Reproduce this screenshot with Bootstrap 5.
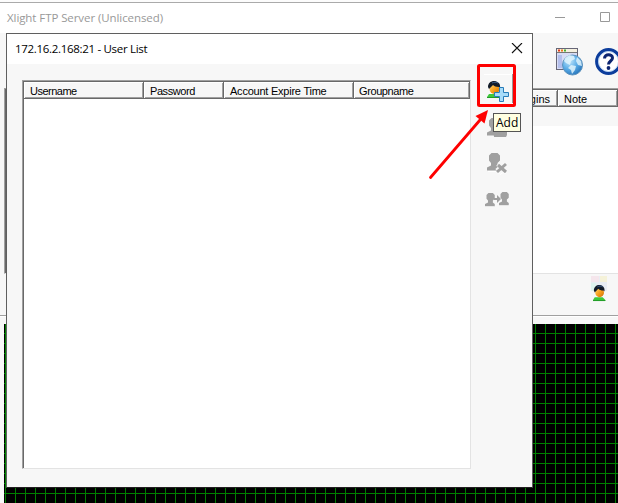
<!DOCTYPE html>
<html lang="en">
<head>
<meta charset="utf-8">
<meta name="viewport" content="width=device-width, initial-scale=1">
<title>Xlight FTP Server</title>
<link href="https://cdn.jsdelivr.net/npm/bootstrap@5.3.0/dist/css/bootstrap.min.css" rel="stylesheet">
<style>
html, body { height: 503px; overflow: hidden; }
body { font: 12px/16px "Open Sans", "Noto Sans", sans-serif; color: #000; background: #f7f7f7; }
svg { display: block; flex: none; }
.main-win { width: 618px; height: 503px; }
.main-title { height: 33px; border-top: 2px solid #fcfcfc; background: #fff; color: #999; }
.main-title .cap { border-top: 1px solid #aaa; padding: 0 8px 0 7px; height: 31px; }
.main-title .txt { font-size: 11.5px; letter-spacing: -.08px; }
.toolbar { height: 55px; padding: 14px 0 0 556px; gap: 11px; }
.main-list { height: 186px; margin-left: 4px; border: solid #a0a0a0; border-width: 1px 0 0 1px; border-bottom: 1px solid #e3e3e3; background: #fff; }
.main-list .inner { border: solid #696969; border-width: 1px 0 0 1px; height: 184px; }
.hcell { font: 11px/17px "Liberation Sans", Arial, sans-serif; background: #f7f7f7; border: solid #696969; border-width: 0 1px 1px 0; box-shadow: inset 1px 1px #fff, inset -1px -1px #a0a0a0; padding: 1px 7px 0 6px; height: 17px; white-space: nowrap; flex: none; }
.sel-row { height: 19px; background: #f7f7f7; }
.status { height: 42px; border-bottom: 1px solid #a0a0a0; padding: 2px 0 0 591px; }
.graph-gap { height: 8px; border-top: 1px solid #fff; }
.graph { margin-left: 4px; background: #000 repeating-linear-gradient(90deg, transparent 0 1px, #008000 1px 2px, transparent 2px 10px); }
.graph .rows { height: 100%; background: repeating-linear-gradient(transparent 0 9px, #008000 9px 10px); }
.dialog { position: absolute; left: 6px; top: 33px; width: 527px; height: 455px; border: 1px solid #5f5f5f; border-bottom-color: #202020; background: #f7f7f7; }
.dlg-title { height: 30px; background: #fff; padding: 0 9px 1px 8px; }
.dlg-title .txt { font-size: 11.5px; letter-spacing: -.31px; }
.dlg-body { padding: 16px 0 0 15px; }
.user-list { width: 449px; height: 389px; background: #fff; border: 1px solid #a0a0a0; border-right-color: #e3e3e3; border-bottom-color: #e3e3e3; }
.user-list .inner { height: 387px; border: solid #696969; border-width: 1px 0 0 1px; }
.w1 { width: 120px; letter-spacing: -.5px; } .w2 { width: 80px; letter-spacing: -.42px; }
.w3 { width: 130px; letter-spacing: -.23px; } .w4 { width: 116px; padding-left: 5px; letter-spacing: -.4px; }
.side { margin-top: -6px; padding: 0 0 0 13px; gap: 13px; }
.overlay { position: absolute; left: 0; top: 0; }
.tip { position: absolute; left: 493px; top: 113px; width: 28px; height: 19px; line-height: 18px; background: #ffffe1; border: 1px solid #555; padding-left: 2px; }
</style>
<script src="https://cdn.jsdelivr.net/npm/bootstrap@5.3.0/dist/js/bootstrap.bundle.min.js"></script>
</head>
<body>
<svg width="0" height="0" class="position-absolute">
<defs>
<linearGradient id="face" x1="0" y1="0" x2="1" y2="1"><stop stop-color="#ffd77a"/><stop offset=".5" stop-color="#f9a01b"/><stop offset="1" stop-color="#c96d05"/></linearGradient>
<radialGradient id="globe" cx=".35" cy=".3" r=".8"><stop stop-color="#c3e6fb"/><stop offset=".5" stop-color="#5caee8"/><stop offset="1" stop-color="#1f6db5"/></radialGradient>
<g id="person"><path d="M0 18l2-3h9l3 3v1H0z" fill="#3fc83a"/><path d="M0 18h14v1H0z" fill="#219a27"/><circle cx="7.500" cy="10" r="5" fill="url(#face)"/><path d="M1 8C1 4 4 2 7 2s7 2 6 7l-1-1c-3 0-5-1-6-2L3 9l-1 1z" fill="#131b28"/><path d="M5 4c2-1 4-1 6 0" stroke="#3d6290" fill="none"/></g>
<path id="bust" d="M4.500 0h6l2.500 2.500v5L10.500 10v2.500L13 14.500v3H0v-3l4-2V10L2 7.500v-5z"/>
</defs>
</svg>
<div class="main-win d-flex flex-column">
  <header class="main-title">
    <div class="cap d-flex align-items-center justify-content-between">
      <span class="txt">Xlight FTP Server (Unlicensed)</span>
      <svg width="55" height="12" fill="none" stroke="#999"><path d="M0 5.500h10M45.500 .500h9v9h-9z"/></svg>
    </div>
  </header>
  <nav class="toolbar d-flex">
    <svg width="28" height="30">
      <rect x=".5" y="1.500" width="21" height="21" fill="#d7dcf5" stroke="#667"/><path d="M1 2h20v4H1z" fill="#f5f0df"/><path d="M1 5.500h20" stroke="#777"/>
      <path d="M2 2.500h2v2H2z" fill="#e43b1a"/><path d="M5 2.500h2v2H5z" fill="#ef7521"/><path d="M8 2.500h2v2H8z" fill="#44af36"/><path d="M2 8h4v13H2z" fill="#b4bfec"/>
      <circle cx="16.500" cy="18" r="10" fill="url(#globe)" stroke="#5c92bd"/>
      <path d="M9 11l4-3 5 1 1 3-4 2-1 4-4-2-2-2zM15 18l5 1-1 4-3 4-1-4-3-2zM21 10l4 4 1 5-4-1-2-4z" fill="#e0f3fc" opacity=".85"/>
    </svg>
    <svg width="28" height="30"><circle cx="13.500" cy="14.500" r="11.800" fill="#fff" stroke="#0c3d9c" stroke-width="3.200"/><circle cx="13.500" cy="14.500" r="10" fill="none" stroke="#b7d4f4"/><path d="M9.500 11.500c0-5 8-5 8-.5 0 3-4 3-4 6.500" fill="none" stroke="#0b2470" stroke-width="3"/><circle cx="13.500" cy="21" r="1.900" fill="#0b2470"/></svg>
  </nav>
  <section class="main-list"><div class="inner">
    <div class="d-flex justify-content-end">
      <div class="hcell text-end" style="width:60px">Logins</div>
      <div class="hcell" style="width:60px">Note</div>
    </div>
    <div class="sel-row"></div>
  </div></section>
  <div class="status"><svg width="16" height="28"><path d="M0 0h16v15H0z" fill="#e9edf3"/><path d="M0 0h8v6H0z" fill="#f5e6ec"/><path d="M9 0h7v6H9z" fill="#f5f2d9"/><path d="M0 7h5v8H0z" fill="#dff3ee"/><use href="#person" transform="translate(2 7) scale(.88 .95)"/></svg></div>
  <div class="graph-gap"></div>
  <div class="graph flex-fill"><div class="rows"></div></div>
</div>

<section class="dialog">
  <header class="dlg-title d-flex align-items-center justify-content-between">
    <span class="txt">172.16.2.168:21 - User List</span>
    <svg width="12" height="12" stroke="#111" stroke-width="1.100"><path d="M1 0l10 10M11 0L1 10"/></svg>
  </header>
  <div class="dlg-body d-flex">
    <div class="user-list"><div class="inner">
      <div class="d-flex">
        <div class="hcell w1">Username</div>
        <div class="hcell w2">Password</div>
        <div class="hcell w3">Account Expire Time</div>
        <div class="hcell w4">Groupname</div>
      </div>
    </div></div>
    <div class="side d-flex flex-column">
      <svg width="29" height="30"><path d="M0 0h28v1H0z" fill="#fff"/><path d="M28 0h1v29h-1z" fill="#999"/><use href="#person" x="3" y="5"/><path d="M14.500 7.500h4v5h5v4h-5v5h-4v-5h-5v-4h5z" transform="translate(1 6)" fill="#a8dcfa" stroke="#287cb9"/></svg>
      <svg width="28" height="23" fill="#a0a0a0"><g transform="translate(3 1)"><use href="#bust"/><path d="M6 8h14v9l-1 2H7z"/></g></svg>
      <svg width="28" height="23" fill="#a0a0a0"><path d="M4 18.500h9M14 19.500l2 2 3-2 3 1" stroke="#fff" fill="none"/><use href="#bust" x="3"/><path d="M14 11l7 7M21 11l-8 7" stroke="#f7f7f7" stroke-width="5"/><path d="M14 12l8 7M22 11l-9 8" stroke="#a0a0a0" stroke-width="3"/></svg>
      <svg width="28" height="20" fill="#a0a0a0"><path d="M1 17.500h9M15 16.500h10" stroke="#fff"/><use href="#bust" transform="translate(1 4) scale(.75)"/><use href="#bust" transform="translate(15 3) scale(.75)"/><path d="M10 9h3V6l4 4-4 4v-3h-3z"/></svg>
    </div>
  </div>
</section>

<svg class="overlay" width="618" height="503"><rect x="478.500" y="65.500" width="36" height="40" rx="1" fill="none" stroke="#fe0000" stroke-width="3"/><path d="M430.500 177.500L480 120" stroke="#fe0000" stroke-width="2.800" stroke-linecap="round"/><path d="M488 110L484.500 123.500L475.500 116z" fill="#fe0000"/></svg>
<div class="tip">Add</div>
</body>
</html>
